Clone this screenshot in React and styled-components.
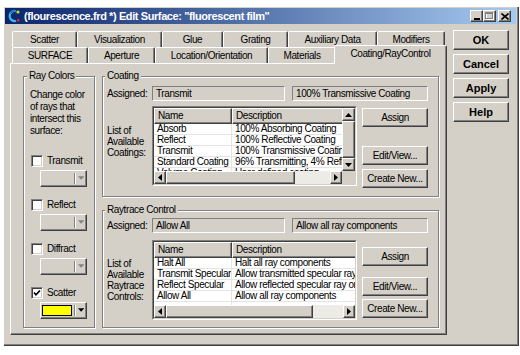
import React from 'react';
import styled, { createGlobalStyle, css } from 'styled-components';

const UI = `"Liberation Sans", Arial, sans-serif`;
const FACE = '#d4d0c8';
const SHADOW = '#808080';
const DARK = '#404040';

const GlobalStyle = createGlobalStyle`
  *, *::before, *::after { box-sizing: border-box; }
  html, body { margin: 0; padding: 0; background: #fff; }
  body { font-family: ${UI}; font-size: 10px; letter-spacing: -0.4px; color: #000; }
`;

const raised = css`
  border: 1px solid;
  border-color: #fff ${DARK} ${DARK} #fff;
  box-shadow: inset -1px -1px 0 ${SHADOW};
  background: ${FACE};
`;

const Page = styled.div`
  width: 520px;
  height: 355px;
  overflow: hidden;
  background: #fff;
  padding: 7px 0 0 4px;
`;

const Window = styled.div`
  width: 515px;
  height: 339px;
  background: ${FACE};
  border-right: 1px solid ${DARK};
  border-bottom: 1px solid ${DARK};
  box-shadow: inset -1px -1px 0 ${SHADOW};
  padding: 1px 2px 0 1px;
`;

const TitleBar = styled.div`
  height: 16px;
  display: flex;
  align-items: center;
  gap: 3px;
  padding: 0 5px 0 2px;
  background: linear-gradient(to right, #0a246a 0%, #a6caf0 100%);
  color: #fff;
  font-weight: bold;
  font-size: 11px;
  letter-spacing: -0.4px;
`;

const TitleText = styled.div`
  flex: 1;
  white-space: nowrap;
  line-height: 16px;
`;

const Controls = styled.div`
  display: flex;
  align-items: center;
`;

const CtlButton = styled.div`
  ${raised};
  width: 13px;
  height: 12px;
  margin-left: ${p => (p.$gap ? 2 : 0)}px;
  display: flex;
  align-items: center;
  justify-content: center;
`;

const Body = styled.div`
  display: flex;
  gap: 6px;
  padding: 7px 0 0 5px;
`;

const TabArea = styled.div`
  width: 437px;
  display: flex;
  flex-direction: column;
`;

const TabRow = styled.div`
  display: flex;
  align-items: flex-start;
  height: 16px;
  padding-left: 2px;
`;

const Tab = styled.div`
  flex: none;
  width: ${p => p.$w}px;
  height: 16px;
  border: 1px solid;
  border-bottom: none;
  border-color: #fff ${DARK} transparent #fff;
  box-shadow: inset -1px 0 0 ${SHADOW};
  border-radius: 2px 2px 0 0;
  background: ${FACE};
  display: flex;
  align-items: center;
  justify-content: center;
  white-space: nowrap;
  line-height: 12px;
  ${p =>
    p.$active &&
    css`
      position: relative;
      z-index: 1;
      height: 19px;
      margin: -2px -2px 0 -2px;
      width: ${p.$w + 4}px;
      align-items: flex-start;
      padding-top: 2px;
    `}
`;

const Panel = styled.div`
  ${raised};
  height: 272px;
  display: flex;
  gap: 7px;
  padding: 6px 0 0 12px;
`;

const Group = styled.div`
  flex: none;
  width: ${p => p.$w}px;
  height: ${p => p.$h}px;
  margin-top: 6px;
  border: 1px solid ${SHADOW};
  box-shadow: inset 1px 1px 0 #fff, 1px 1px 0 #fff;
  display: flex;
  flex-direction: column;
`;

const Legend = styled.div`
  align-self: flex-start;
  height: 12px;
  line-height: 12px;
  margin: -7px 0 -5px ${p => p.$ml}px;
  padding: 0 2px;
  background: ${FACE};
  white-space: nowrap;
`;

const RayBody = styled.div`
  padding: 12px 0 0 6px;
`;

const Hint = styled.div`
  line-height: 12px;
  white-space: nowrap;
`;

const RayList = styled.div`
  display: flex;
  flex-direction: column;
  gap: 12px;
  margin-top: 18px;
  padding-left: 1px;
`;

const RayItem = styled.div`
  display: flex;
  flex-direction: column;
`;

const CheckRow = styled.div`
  display: flex;
  align-items: center;
  gap: 4px;
  height: 12px;
  line-height: 12px;
`;

const CheckBox = styled.div`
  flex: none;
  width: 12px;
  height: 12px;
  border: 1px solid;
  border-color: ${SHADOW} #fff #fff ${SHADOW};
  box-shadow: inset 1px 1px 0 ${DARK}, inset -1px -1px 0 ${FACE};
  background: #fff;
  display: flex;
  align-items: center;
  justify-content: center;
`;

const ColorButton = styled.div`
  ${raised};
  width: 47px;
  height: 17px;
  margin: 3px 0 0 9px;
  display: flex;
  align-items: center;
  padding: 1px 2px 2px 1px;
`;

const Swatch = styled.div`
  width: 33px;
  height: 11px;
  border: 1px solid ${p => (p.$color ? '#000' : 'transparent')};
  background: ${p => p.$color || 'transparent'};
`;

const Sep = styled.div`
  width: 2px;
  height: 11px;
  margin: 0 2px 0 2px;
  border-left: 1px solid ${SHADOW};
  border-right: 1px solid #fff;
`;

const RightCol = styled.div`
  display: flex;
  flex-direction: column;
  gap: 7px;
`;

const GroupBody = styled.div`
  display: flex;
  flex-direction: column;
  gap: ${p => p.$gap}px;
  padding: ${p => p.$pt}px 0 0 4px;
`;

const Line = styled.div`
  display: flex;
  align-items: center;
`;

const SideLabel = styled.div`
  flex: none;
  width: 45px;
  line-height: ${p => p.$lh || 11}px;
  white-space: nowrap;
  margin-top: ${p => p.$mt || 0}px;
`;

const Field = styled.div`
  flex: none;
  width: ${p => p.$w}px;
  height: 15px;
  margin-left: ${p => p.$ml || 0}px;
  border: 1px solid;
  border-color: ${SHADOW} #fff #fff ${SHADOW};
  padding: 0 3px;
  line-height: 13px;
  white-space: nowrap;
  overflow: hidden;
`;

const ListRow = styled.div`
  display: flex;
  align-items: stretch;
`;

const ListFrame = styled.div`
  flex: none;
  width: 205px;
  height: 80px;
  border: 1px solid;
  border-color: ${SHADOW} #fff #fff ${SHADOW};
`;

const ListInner = styled.div`
  height: 100%;
  border: 1px solid;
  border-color: ${DARK} ${FACE} ${FACE} ${DARK};
  background: #fff;
  display: grid;
  grid-template-columns: ${p => (p.$vscroll ? '1fr 13px' : '1fr')};
  grid-template-rows: 1fr 13px;
  overflow: hidden;
`;

const TableView = styled.div`
  overflow: hidden;
  min-width: 0;
`;

const HeaderRow = styled.div`
  display: flex;
  height: 16px;
  width: 260px;
`;

const HeaderCell = styled.div`
  ${raised};
  flex: none;
  width: ${p => p.$w}px;
  padding-left: 3px;
  line-height: 13px;
  white-space: nowrap;
`;

const DataRow = styled.div`
  display: flex;
  height: 11px;
  width: 260px;
  border-bottom: 1px solid #e4e4e4;
`;

const DataCell = styled.div`
  flex: none;
  width: ${p => p.$w}px;
  padding-left: 3px;
  line-height: 10px;
  white-space: nowrap;
  overflow: hidden;
  border-right: ${p => (p.$divider ? '1px solid #e4e4e4' : 'none')};
`;

const VScroll = styled.div`
  display: flex;
  flex-direction: column;
  background: #ecebe6;
`;

const HScroll = styled.div`
  display: flex;
  background: #ecebe6;
  min-width: 0;
`;

const ArrowBtn = styled.div`
  ${raised};
  flex: none;
  width: ${p => p.$w || 13}px;
  height: ${p => p.$h || 13}px;
  display: flex;
  align-items: center;
  justify-content: center;
`;

const Thumb = styled.div`
  ${raised};
  flex: ${p => (p.$size ? 'none' : 1)};
  width: ${p => (p.$size ? `${p.$size}px` : 'auto')};
`;

const Track = styled.div`
  flex: 1;
`;

const Corner = styled.div`
  background: ${FACE};
`;

const SideButtons = styled.div`
  flex: none;
  width: 66px;
  margin-left: 5px;
  display: flex;
  flex-direction: column;
  gap: ${p => p.$gap}px;
  padding-top: ${p => p.$pt}px;
  margin-bottom: ${p => p.$mb}px;
`;

const Spacer = styled.div`
  flex: 1;
`;

const PushButton = styled.div`
  ${raised};
  flex: none;
  height: ${p => p.$h || 19}px;
  display: flex;
  align-items: center;
  justify-content: center;
  white-space: nowrap;
`;

const DialogButtons = styled.div`
  flex: none;
  width: 56px;
  display: flex;
  flex-direction: column;
  gap: 4px;
  margin-top: -1px;
`;

const DialogButton = styled(PushButton)`
  height: 20px;
  font-weight: bold;
  font-size: 11px;
  letter-spacing: 0;
`;

function Tri({ dir = 'down', color = '#000' }) {
  const vertical = dir === 'up' || dir === 'down';
  const w = vertical ? 7 : 4;
  const h = vertical ? 4 : 7;
  const pts = {
    up: '0,4 7,4 3.5,0',
    down: '0,0 7,0 3.5,4',
    left: '4,0 4,7 0,3.5',
    right: '0,0 0,7 4,3.5',
  }[dir];
  return (
    <svg width={w} height={h} viewBox={`0 0 ${w} ${h}`}>
      <polygon points={pts} fill={color} />
    </svg>
  );
}

function AppIcon() {
  return (
    <svg width="14" height="14" viewBox="0 0 14 14">
      <path d="M9 2.2 A5 5 0 1 0 9 11.8" fill="none" stroke="#3ab8f0" strokeWidth="2.2" />
      <path d="M9 2.2 A5 5 0 0 0 3.2 4.5" fill="none" stroke="#1060c0" strokeWidth="1.2" />
      <circle cx="11" cy="3" r="1.6" fill="#c8e020" />
      <circle cx="11.2" cy="11.2" r="1.3" fill="#e03030" />
    </svg>
  );
}

const backTabs = [
  { label: 'Scatter', w: 65 },
  { label: 'Visualization', w: 85 },
  { label: 'Glue', w: 61 },
  { label: 'Grating', w: 65 },
  { label: 'Auxiliary Data', w: 89 },
  { label: 'Modifiers', w: 68 },
];

const frontTabs = [
  { label: 'SURFACE', w: 76 },
  { label: 'Aperture', w: 67 },
  { label: 'Location/Orientation', w: 113 },
  { label: 'Materials', w: 68 },
  { label: 'Coating/RayControl', w: 109, active: true },
];

const rays = [
  { label: 'Transmit' },
  { label: 'Reflect' },
  { label: 'Diffract' },
  { label: 'Scatter', checked: true, color: '#ffff00' },
];

const coatings = [
  ['Absorb', '100% Absorbing Coating'],
  ['Reflect', '100% Reflective Coating'],
  ['Transmit', '100% Transmissive Coating'],
  ['Standard Coating', '96% Transmitting, 4% Reflecting'],
  ['Volume Coating', 'User defined coating'],
];

const controls = [
  ['Halt All', 'Halt all ray components'],
  ['Transmit Specular', 'Allow transmitted specular ray'],
  ['Reflect Specular', 'Allow reflected specular ray or'],
  ['Allow All', 'Allow all ray components'],
  ['', ''],
];

function Catalog({ title, h, pt, gap, assigned, desc, labelLines, labelMt, labelLh, rows, vscroll, thumb, btnPt, btnGap, btnMb }) {
  return (
    <Group $w={337} $h={h}>
      <Legend $ml={2}>{title}</Legend>
      <GroupBody $pt={pt} $gap={gap}>
        <Line>
          <SideLabel>Assigned:</SideLabel>
          <Field $w={133}>{assigned}</Field>
          <Field $w={136} $ml={7}>{desc}</Field>
        </Line>
        <ListRow>
          <SideLabel $mt={labelMt} $lh={labelLh}>
            {labelLines.map((l, i) => (
              <div key={i}>{l}</div>
            ))}
          </SideLabel>
          <ListFrame>
            <ListInner $vscroll={vscroll}>
              <TableView>
                <HeaderRow>
                  <HeaderCell $w={78}>Name</HeaderCell>
                  <HeaderCell $w={182}>Description</HeaderCell>
                </HeaderRow>
                {rows.map((r, i) => (
                  <DataRow key={i}>
                    <DataCell $w={78} $divider>{r[0]}</DataCell>
                    <DataCell $w={182}>{r[1]}</DataCell>
                  </DataRow>
                ))}
              </TableView>
              {vscroll && (
                <VScroll>
                  <ArrowBtn><Tri dir="up" /></ArrowBtn>
                  <Thumb />
                  <ArrowBtn><Tri dir="down" /></ArrowBtn>
                </VScroll>
              )}
              <HScroll>
                <ArrowBtn $w={12}><Tri dir="left" /></ArrowBtn>
                <Thumb $size={thumb} />
                <Track />
                <ArrowBtn $w={12}><Tri dir="right" /></ArrowBtn>
              </HScroll>
              {vscroll && <Corner />}
            </ListInner>
          </ListFrame>
          <SideButtons $pt={btnPt} $gap={btnGap} $mb={btnMb}>
            <PushButton>Assign</PushButton>
            <Spacer />
            <PushButton>Edit/View...</PushButton>
            <PushButton>Create New...</PushButton>
          </SideButtons>
        </ListRow>
      </GroupBody>
    </Group>
  );
}

export default function App() {
  return (
    <>
      <GlobalStyle />
      <Page>
        <Window>
          <TitleBar>
            <AppIcon />
            <TitleText>(flourescence.frd *) Edit Surface: "fluorescent film"</TitleText>
            <Controls>
              <CtlButton>
                <svg width="6" height="8" viewBox="0 0 6 8"><rect x="0" y="6" width="6" height="2" fill="#000" /></svg>
              </CtlButton>
              <CtlButton>
                <svg width="9" height="8" viewBox="0 0 9 8">
                  <rect x="1.5" y="1.5" width="7" height="6" fill="none" stroke="#fff" />
                  <rect x="0.5" y="0.5" width="7" height="6" fill="none" stroke={SHADOW} />
                  <rect x="0.5" y="1" width="7" height="1" fill={SHADOW} />
                </svg>
              </CtlButton>
              <CtlButton $gap>
                <svg width="8" height="7" viewBox="0 0 8 7">
                  <path d="M0.5 0.5 L7.5 6.5 M7.5 0.5 L0.5 6.5" stroke="#000" strokeWidth="1.6" />
                </svg>
              </CtlButton>
            </Controls>
          </TitleBar>
          <Body>
            <TabArea>
              <TabRow>
                {backTabs.map(t => (
                  <Tab key={t.label} $w={t.w}>{t.label}</Tab>
                ))}
              </TabRow>
              <TabRow>
                {frontTabs.map(t => (
                  <Tab key={t.label} $w={t.w} $active={t.active}>{t.label}</Tab>
                ))}
              </TabRow>
              <Panel>
                <Group $w={72} $h={252}>
                  <Legend $ml={3}>Ray Colors</Legend>
                  <RayBody>
                    <Hint>
                      Change color<br />of rays that<br />intersect this<br />surface:
                    </Hint>
                    <RayList>
                      {rays.map(r => (
                        <RayItem key={r.label}>
                          <CheckRow>
                            <CheckBox>
                              {r.checked && (
                                <svg width="8" height="8" viewBox="0 0 8 8">
                                  <polyline points="1,3.5 3,5.8 7,1.5" fill="none" stroke="#000" strokeWidth="1.7" />
                                </svg>
                              )}
                            </CheckBox>
                            <span>{r.label}</span>
                          </CheckRow>
                          <ColorButton>
                            <Swatch $color={r.color} />
                            <Sep />
                            <Tri dir="down" color={r.checked ? '#000' : SHADOW} />
                          </ColorButton>
                        </RayItem>
                      ))}
                    </RayList>
                  </RayBody>
                </Group>
                <RightCol>
                  <Catalog
                    title="Coating"
                    h={121}
                    pt={9}
                    gap={5}
                    assigned="Transmit"
                    desc="100% Transmissive Coating"
                    labelLines={['List of', 'Available', 'Coatings:']}
                    labelMt={19}
                    labelLh={11}
                    rows={coatings}
                    vscroll
                    thumb={129}
                    btnPt={2}
                    btnGap={4}
                    btnMb={-2}
                  />
                  <Catalog
                    title="Raytrace Control"
                    h={118}
                    pt={7}
                    gap={7}
                    assigned="Allow All"
                    desc="Allow all ray components"
                    labelLines={['List of', 'Available', 'Raytrace', 'Controls:']}
                    labelMt={18}
                    labelLh={11}
                    rows={controls}
                    thumb={147}
                    btnPt={7}
                    btnGap={3}
                    btnMb={2}
                  />
                </RightCol>
              </Panel>
            </TabArea>
            <DialogButtons>
              <DialogButton>OK</DialogButton>
              <DialogButton>Cancel</DialogButton>
              <DialogButton>Apply</DialogButton>
              <DialogButton>Help</DialogButton>
            </DialogButtons>
          </Body>
        </Window>
      </Page>
    </>
  );
}
